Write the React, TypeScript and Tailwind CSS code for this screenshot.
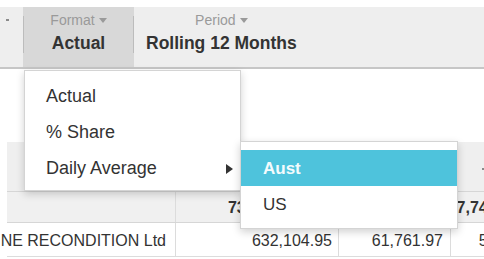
import React from 'react';

const Caret = () => (
  <span className="inline-block w-0 h-0 border-l-[4.5px] border-r-[4.5px] border-t-[5px] border-l-transparent border-r-transparent border-t-[#9a9a9a]" />
);

const ToolbarItem = ({ label, value, active }: { label: string; value: string; active?: boolean }) => (
  <div className={`flex flex-col items-center pt-[5px] px-[12px] ${active ? 'bg-[#d8d8d8]' : ''}`}>
    <div className="flex items-center gap-[4px] text-[14px] leading-[16px] text-[#9a9a9a]">
      {label} <Caret />
    </div>
    <div className="mt-[5px] text-[17.5px] leading-[20px] font-bold text-[#333]">{value}</div>
  </div>
);

const Separator = () => <div className="self-start mt-[9px] w-px h-[37px] bg-[#bcbcbc]" />;

export default function App() {
  const cols = 'grid grid-cols-[168px_163px_112px_107px_120px]';
  return (
    <div className="relative w-[484px] h-[259px] overflow-hidden bg-white text-[#333] font-[family-name:Liberation_Sans,Arial,sans-serif]">
      {/* Toolbar */}
      <div className="mt-[7px] h-[62px] flex bg-[#eeeeee] border-b-2 border-[#c6c6c6]">
        <div className="w-[23px] pl-[6px] pt-[12px]">
          <div className="w-[3px] h-[2px] bg-[#8a8a8a]" />
        </div>
        <div className="flex w-[111px] bg-[#d8d8d8]">
          <Separator />
          <div className="flex-1 flex justify-center">
            <ToolbarItem label="Format" value="Actual" active />
          </div>
          <Separator />
        </div>
        <ToolbarItem label="Period" value="Rolling 12 Months" />
      </div>

      {/* Empty space above grid */}
      <div className="h-[73px]" />

      {/* Grid */}
      <div className="ml-[7px] w-[700px] text-[16px]">
        <div className={`${cols} h-[50px] bg-[#efefef] border-b border-[#d6d6d6]`}>
          <div />
          <div className="border-l border-[#dcdcdc]" />
          <div className="border-l border-[#dcdcdc]" />
          <div className="border-l border-[#dcdcdc] pl-[31px] pt-[26px]">
            <div className="w-[3px] h-[2px] bg-[#8a8a8a]" />
          </div>
          <div className="border-l border-[#dcdcdc]" />
        </div>
        <div className={`${cols} h-[31px] bg-[#f0f0f0] border-b border-[#d6d6d6] font-bold`}>
          <div />
          <div className="border-l border-[#dcdcdc] flex items-center justify-end pr-[30px] pt-[1px]">735,219.58</div>
          <div className="border-l border-[#dcdcdc] flex items-center justify-end pr-[7px] pt-[1px]">61,761.97</div>
          <div className="border-l border-[#dcdcdc] flex items-center justify-end pr-[7px] pt-[1px]">7,745,120.33</div>
          <div className="border-l border-[#dcdcdc]" />
        </div>
        <div className={`${cols} h-[34px] border-b border-[#dcdcdc]`}>
          <div className="flex items-center justify-end pr-[9px] pt-[3px]">
            <span className="shrink-0 whitespace-nowrap">ENGINE RECONDITION Ltd</span>
          </div>
          <div className="border-l border-[#dcdcdc] flex items-center justify-end pr-[6px] pt-[3px]">632,104.95</div>
          <div className="border-l border-[#dcdcdc] flex items-center justify-end pr-[7px] pt-[3px]">61,761.97</div>
          <div className="border-l border-[#dcdcdc] flex items-center justify-end pr-[7px] pt-[3px]">52,306.18</div>
          <div className="border-l border-[#dcdcdc]" />
        </div>
      </div>

      {/* Format dropdown */}
      <div className="absolute left-[24px] top-[70px] w-[217px] bg-white border border-[#d4d4d4] pt-[7px] pb-[4px] text-[18px] shadow-[0_3px_8px_rgba(0,0,0,0.18)]">
        <div className="h-[36px] flex items-center pl-[21px] pt-[1px]">Actual</div>
        <div className="h-[36px] flex items-center pl-[21px] pt-[1px]">% Share</div>
        <div className="h-[36px] flex items-center justify-between pl-[21px] pr-[7px] pt-[1px]">
          Daily Average
          <span className="w-0 h-0 border-l-[7px] border-l-[#333] border-y-[5px] border-y-transparent" />
        </div>
      </div>

      {/* Submenu */}
      <div className="absolute left-[240px] top-[141px] w-[218px] bg-white border border-[#d4d4d4] pt-[8px] pb-[6px] text-[17px] shadow-[0_3px_8px_rgba(0,0,0,0.18)]">
        <div className="h-[36px] flex items-center pl-[22px] pt-[2px] bg-[#4ec3dc] text-[#f4fbfd] font-bold">Aust</div>
        <div className="h-[36px] flex items-center pl-[22px] pt-[2px]">US</div>
      </div>
    </div>
  );
}
